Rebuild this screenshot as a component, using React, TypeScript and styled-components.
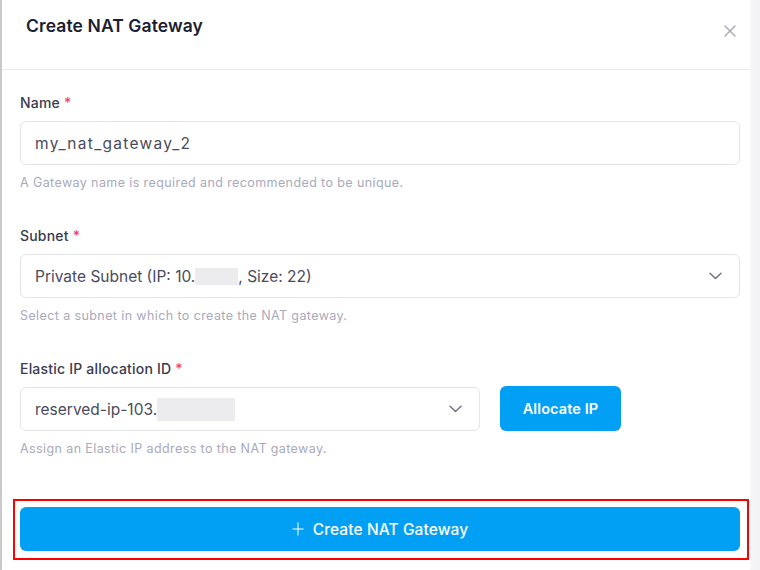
import { styled, createGlobalStyle } from "styled-components"

const GlobalStyle = createGlobalStyle`
  html, body {
    margin: 0;
    padding: 0;
    background: #ffffff;
  }
  body {
    font-family: Inter, "Noto Sans", "Liberation Sans", sans-serif;
    -webkit-font-smoothing: antialiased;
  }
  * {
    box-sizing: border-box;
  }
`

const colors = {
  title: "#1d1e2f",
  label: "#3a3b4d",
  text: "#4a4b5d",
  help: "#a9aabb",
  border: "#e3e3ec",
  blue: "#02a0f5",
  required: "#f0446d",
}

const Chevron = () => (
  <svg width="13" height="8" viewBox="0 0 13 8" fill="none">
    <path d="M1 1.2l5.5 5.3L12 1.2" stroke="#6f7082" strokeWidth="1.4" strokeLinecap="round" strokeLinejoin="round" />
  </svg>
)

const App = () => {
  return (
    <>
      <GlobalStyle />
      <Screen>
        <Drawer>
          <Header>
            <Title>Create NAT Gateway</Title>
            <CloseButton aria-label="close">
              <svg width="12" height="12" viewBox="0 0 12 12" fill="none">
                <path d="M1 1l10 10M11 1L1 11" stroke="#a3a3b6" strokeWidth="1.3" strokeLinecap="round" />
              </svg>
            </CloseButton>
          </Header>

          <Body>
            <Field>
              <Label>
                Name <Required>*</Required>
              </Label>
              <TextInput>my_nat_gateway_2</TextInput>
              <Help>A Gateway name is required and recommended to be unique.</Help>
            </Field>

            <Field>
              <Label>
                Subnet <Required>*</Required>
              </Label>
              <Select>
                <SelectValue>
                  Private Subnet (IP: 10.<Redacted $w={43} $h={17} />, Size: 22)
                </SelectValue>
                <Chevron />
              </Select>
              <Help>Select a subnet in which to create the NAT gateway.</Help>
            </Field>

            <Field>
              <Label>
                Elastic IP allocation ID <Required>*</Required>
              </Label>
              <Row>
                <Select $width={460}>
                  <SelectValue>
                    reserved-ip-103.<Redacted $w={78} $h={23} />
                  </SelectValue>
                  <Chevron />
                </Select>
                <SmallButton>Allocate IP</SmallButton>
              </Row>
              <Help>Assign an Elastic IP address to the NAT gateway.</Help>
            </Field>

            <Highlight>
              <SubmitButton>
                <svg width="12" height="14" viewBox="0 0 12 14" fill="none">
                  <path d="M6 0.5v13M0.5 7h11" stroke="#ffffff" strokeWidth="1" />
                </svg>
                Create NAT Gateway
              </SubmitButton>
            </Highlight>
          </Body>
        </Drawer>
        <Shade />
      </Screen>
    </>
  )
}

export default App

const Screen = styled.div`
  display: flex;
  width: 760px;
  height: 570px;
  overflow: hidden;
`

const Drawer = styled.div`
  flex: 1;
  border-left: 2px solid #c9c9c9;
  background: #ffffff;
  display: flex;
  flex-direction: column;
`

const Shade = styled.div`
  width: 10px;
  background: linear-gradient(to right, #f7f7f9, #f2f2f4);
`

const Header = styled.div`
  height: 70px;
  border-bottom: 1px solid #e9e9ef;
  display: flex;
  align-items: flex-start;
  justify-content: space-between;
  padding: 14px 14px 0 24px;
`

const Title = styled.h2`
  margin: 0;
  font-size: 17.5px;
  line-height: 24px;
  font-weight: 600;
  color: ${colors.title};
  letter-spacing: 0.1px;
`

const CloseButton = styled.button`
  border: none;
  background: none;
  padding: 0;
  margin-top: 11px;
  width: 12px;
  height: 12px;
  display: flex;
`

const Body = styled.div`
  padding: 23px 10px 0 18px;
  display: flex;
  flex-direction: column;
`

const Field = styled.div`
  display: flex;
  flex-direction: column;
  margin-bottom: 34px;
`

const Label = styled.label`
  font-size: 14px;
  line-height: 20px;
  font-weight: 500;
  color: ${colors.label};
  margin-bottom: 8px;
  letter-spacing: 0.2px;
`

const Required = styled.span`
  color: ${colors.required};
`

const TextInput = styled.div`
  height: 44px;
  border: 1px solid ${colors.border};
  border-radius: 6px;
  padding: 0 14px;
  display: flex;
  align-items: center;
  font-size: 15.5px;
  color: ${colors.text};
  letter-spacing: 1.3px;
`

const Select = styled.div<{ $width?: number }>`
  height: 44px;
  width: ${(p) => (p.$width ? `${p.$width}px` : "100%")};
  border: 1px solid ${colors.border};
  border-radius: 6px;
  padding: 0 17px 0 14px;
  display: flex;
  align-items: center;
  justify-content: space-between;
`

const SelectValue = styled.span`
  display: flex;
  align-items: center;
  font-size: 15.5px;
  color: ${colors.text};
  white-space: nowrap;
`

const Redacted = styled.span<{ $w: number; $h: number }>`
  display: inline-block;
  width: ${(p) => p.$w}px;
  height: ${(p) => p.$h}px;
  background: #ececee;
  filter: blur(0.6px);
`

const Row = styled.div`
  display: flex;
  align-items: flex-start;
  gap: 20px;
`

const SmallButton = styled.button`
  width: 121px;
  height: 45px;
  border: none;
  border-radius: 6px;
  background: ${colors.blue};
  color: #ffffff;
  font-family: inherit;
  font-size: 14.5px;
  font-weight: 600;
  letter-spacing: 0.1px;
  margin-top: -1px;
`

const Help = styled.p`
  margin: 9px 0 0;
  font-size: 12.5px;
  line-height: 18px;
  color: ${colors.help};
  letter-spacing: 0.4px;
`

const Highlight = styled.div`
  margin: 7px -9px 0 -7px;
  border: 2px solid #ff0000;
  padding: 6px 7px 7px 5px;
`

const SubmitButton = styled.button`
  width: 100%;
  height: 44px;
  border: none;
  border-radius: 6px;
  background: ${colors.blue};
  color: #ffffff;
  font-family: inherit;
  font-size: 15.5px;
  font-weight: 500;
  display: flex;
  align-items: center;
  justify-content: center;
  gap: 9px;
  letter-spacing: 0.1px;
`
